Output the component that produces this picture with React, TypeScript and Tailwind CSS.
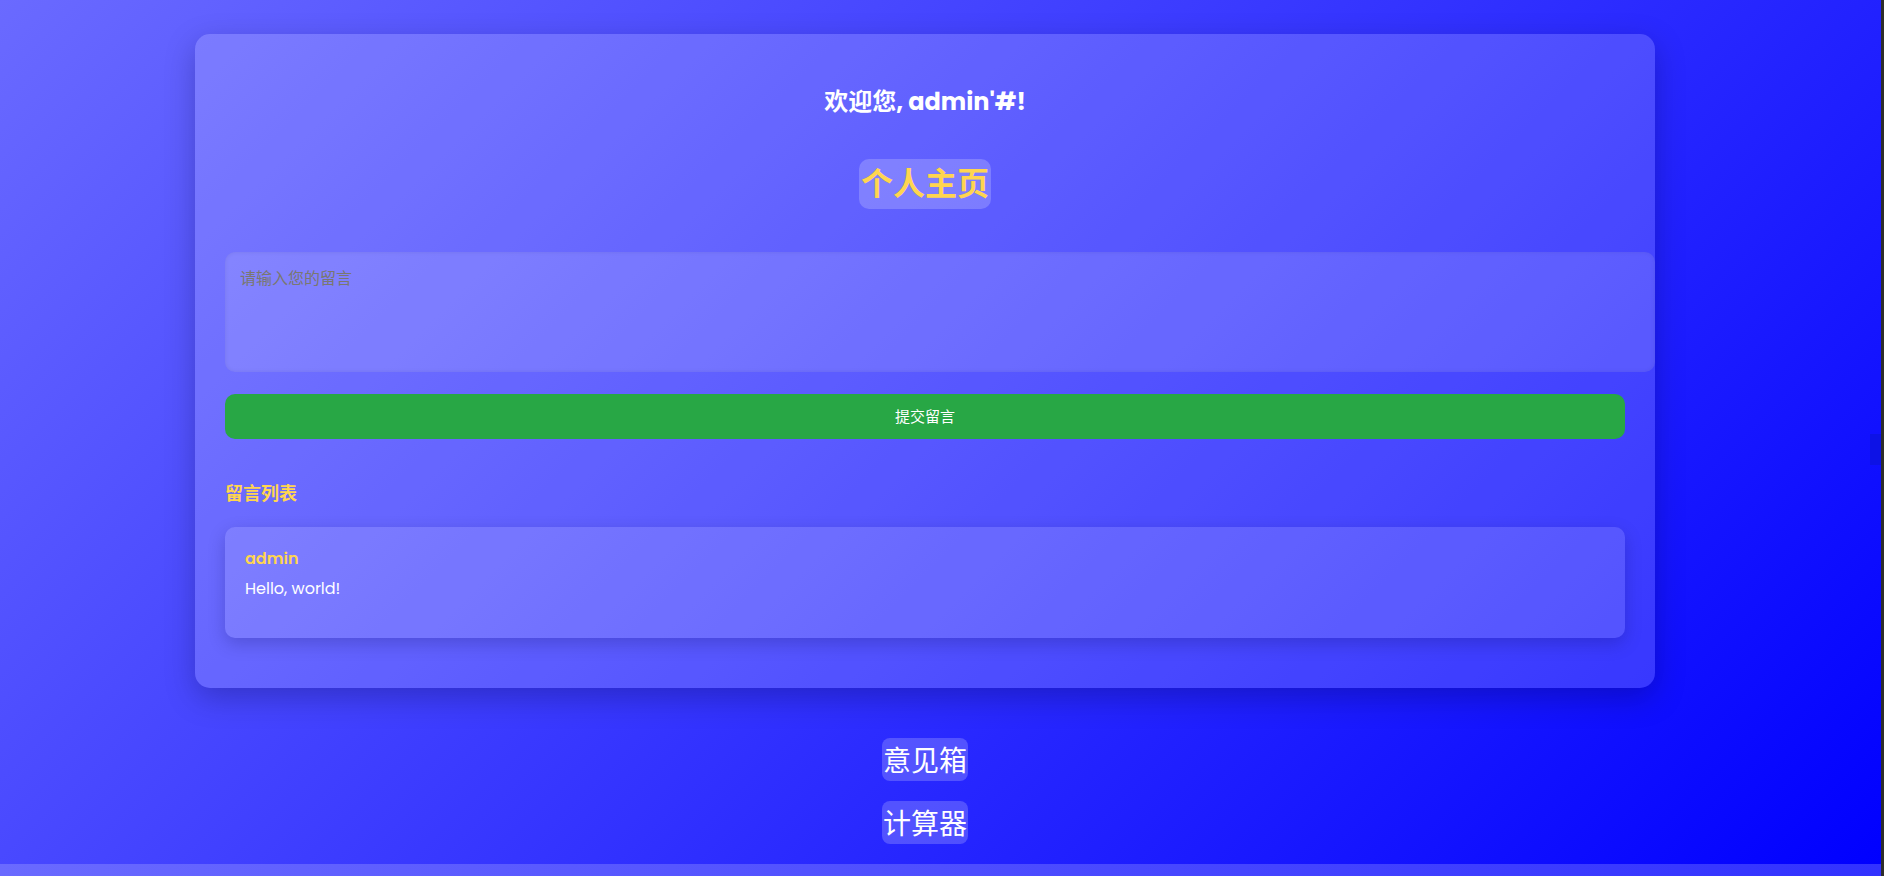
import { useState } from "react";

const font = { fontFamily: '"Poppins", "Noto Sans", "Noto Sans CJK SC", sans-serif' };

export default function App() {
    const [msg, setMsg] = useState('');

    return (
        <div className="flex w-[1884px] h-[876px] overflow-hidden" style={font}>
            <div className="relative flex-1 flex flex-col">
                <div className="h-[864px] bg-[linear-gradient(135deg,#6a6aff,#0000ff)]">
                    <div className="w-[1850px] flex flex-col items-center pt-[34px]">
                        {/* main card */}
                        <div className="w-[1460px] rounded-[15px] bg-white/[0.17] shadow-[0_10px_30px_rgba(0,0,40,0.25)] px-[30px] pt-[30px] pb-[50px]">
                            <h2 className="mt-[20px] text-center text-[24px] leading-[36px] font-bold text-white">欢迎您, admin'#!</h2>
                            <div className="mt-[39px] flex justify-center">
                                <a className="rounded-[10px] bg-white/20 px-[2px] py-[5px] text-[32px] leading-[40px] font-bold text-[#ffd54f]">个人主页</a>
                            </div>
                            <textarea
                                value={msg}
                                onChange={(e) => setMsg(e.target.value)}
                                placeholder="请输入您的留言"
                                className="mt-[43px] block w-[1430px] h-[120px] resize-none rounded-[10px] bg-white/[0.12] px-[15px] py-[14px] text-[16px] leading-[22px] text-white shadow-[inset_0_0_4px_rgba(0,0,0,0.08)] outline-none placeholder:text-[#7a7870]"
                                style={{ fontFamily: '"Noto Sans CJK SC", sans-serif' }}
                            />
                            <button className="mt-[22px] block w-full h-[45px] rounded-[10px] bg-[#28a745] text-[15px] leading-[45px] text-white">提交留言</button>

                            <h3 className="mt-[41px] text-[18px] leading-[27px] font-bold text-[#ffd54f]">留言列表</h3>
                            <div className="mt-[20px] rounded-[10px] bg-white/[0.13] shadow-[0_6px_18px_rgba(0,0,60,0.2)] px-[20px] pt-[20px] pb-[37px]">
                                <div className="text-[16px] leading-[24px] font-semibold text-[#ffd54f]">admin</div>
                                <p className="mt-[6px] text-[16px] leading-[24px] text-white">Hello, world!</p>
                            </div>
                        </div>

                        {/* links */}
                        <a className="mt-[50px] rounded-[8px] bg-white/20 h-[43px] px-[1px] text-[28px] leading-[43px] text-white" style={{ fontFamily: '"Noto Sans CJK SC", sans-serif' }}>意见箱</a>
                        <a className="mt-[20px] rounded-[8px] bg-white/20 h-[43px] px-[1px] text-[28px] leading-[43px] text-white" style={{ fontFamily: '"Noto Sans CJK SC", sans-serif' }}>计算器</a>
                    </div>
                </div>
                <div className="h-[12px] bg-[linear-gradient(90deg,#6a6aff,#3232ff)]" />
                <div className="absolute right-0 top-[434px] w-[11px] h-[31px] bg-[#0d12e6]" />
            </div>
            <div className="w-[3px] bg-[#2d2d2d]" />
        </div>
    );
}
